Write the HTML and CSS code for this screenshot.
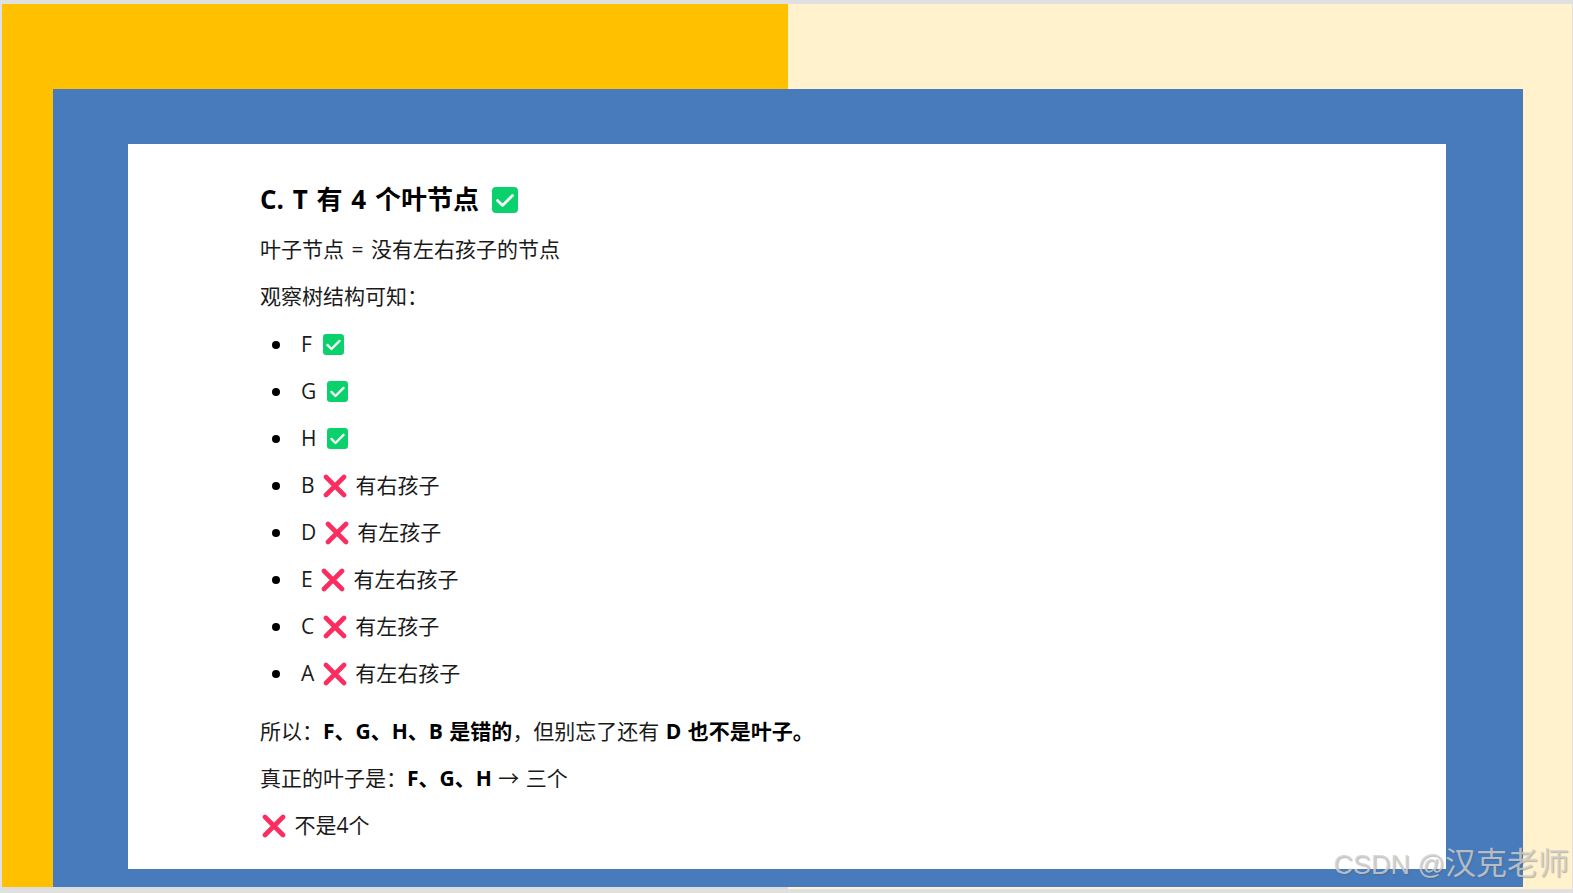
FILE: index.html
```html
<!DOCTYPE html>
<html lang="zh-CN">
<head>
<meta charset="utf-8">
<title>C. T 有 4 个叶节点</title>
<link rel="stylesheet" href="styles.css">
</head>
<body>
<svg class="defs" width="0" height="0" aria-hidden="true">
  <symbol id="ok" viewBox="0 0 26 26">
    <rect x="0" y="0" width="26" height="26" rx="4" fill="#0ad16b"/>
    <path d="M5.5 13.5 L10.5 18.5 L20.5 8.5" fill="none" stroke="#fff" stroke-width="2.8" stroke-linecap="round" stroke-linejoin="round"/>
  </symbol>
  <symbol id="no" viewBox="0 0 24 24">
    <path d="M3 3 L21 21 M21 3 L3 21" fill="none" stroke="#fb2c5f" stroke-width="4.6" stroke-linecap="round"/>
  </symbol>
</svg>
<main class="slide">
  <section class="frame">
    <article class="card">
      <h3 class="title">C. T 有 4 个叶节点 <svg class="ico-lg"><use href="#ok"/></svg></h3>
      <p class="line wide">叶子节点 = 没有左右孩子的节点</p>
      <p class="line">观察树结构可知：</p>
      <ul class="list">
        <li>F <svg class="ico-ok"><use href="#ok"/></svg></li>
        <li>G <svg class="ico-ok"><use href="#ok"/></svg></li>
        <li>H <svg class="ico-ok"><use href="#ok"/></svg></li>
        <li>B <svg class="ico-no"><use href="#no"/></svg> 有右孩子</li>
        <li>D <svg class="ico-no"><use href="#no"/></svg> 有左孩子</li>
        <li>E <svg class="ico-no"><use href="#no"/></svg> 有左右孩子</li>
        <li>C <svg class="ico-no"><use href="#no"/></svg> 有左孩子</li>
        <li>A <svg class="ico-no"><use href="#no"/></svg> 有左右孩子</li>
      </ul>
      <p class="line">所以：<strong>F、G、H、B 是错的</strong>，但别忘了还有 <strong>D 也不是叶子。</strong></p>
      <p class="line">真正的叶子是：<strong>F、G、H</strong> → 三个</p>
      <p class="line"><svg class="ico-no ico-first"><use href="#no"/></svg> 不是4个</p>
    </article>
  </section>
  <span class="mark">CSDN @<span class="mark-cjk">汉克老师</span></span>
</main>
</body>
</html>
```
FILE: styles.css
```css
html, body {
  margin: 0;
  padding: 0;
  height: 893px;
  overflow: hidden;
  background: #e0e0e0;
}
body {
  padding: 4px 1px 0 2px;
  box-sizing: border-box;
  font-family: "Open Sans", "Noto Sans CJK SC", sans-serif;
  color: #1a1a1a;
}
.defs { position: absolute; }
.slide {
  position: relative;
  height: 885px;
  box-sizing: border-box;
  padding: 85px 49px 2px 51px;
  background:
    linear-gradient(#dcdcdc, #dcdcdc) left bottom / 786px 2px no-repeat,
    linear-gradient(to right, #ffc000 786px, #fff2cc 786px);
}
.frame {
  height: 798px;
  box-sizing: border-box;
  padding: 55px 77px 18px 75px;
  background: #477bbc;
}
.card {
  height: 725px;
  box-sizing: border-box;
  padding: 32px 132px 0;
  background: #fff;
  font-size: 21px;
  line-height: 47px;
  word-spacing: 1px;
}
.title {
  margin: 0 0 3px;
  font-size: 26px;
  line-height: 47px;
  font-weight: 700;
  color: #000;
  word-spacing: 2px;
}
.line {
  margin: 0;
  height: 47px;
  white-space: nowrap;
}
.wide { word-spacing: 2px; }
.line strong { font-weight: 700; color: #000; }
.list {
  margin: 1px 0 11px;
  padding: 0 0 0 41px;
  list-style: none;
}
.list li { height: 47px; }
.list li::before {
  content: "";
  display: inline-block;
  width: 8px;
  height: 8px;
  margin: 0 21px 3px -29px;
  border-radius: 50%;
  background: #000;
}
.ico-lg, .ico-ok, .ico-no { display: inline-block; }
.ico-lg { width: 26px; height: 26px; margin-left: 4px; vertical-align: -4px; }
.ico-ok { width: 21px; height: 21px; margin-left: 4.5px; vertical-align: -3px; }
.ico-no { width: 24px; height: 24px; margin: 0 2px 0 2px; vertical-align: -5px; }
.mark {
  position: absolute;
  right: 3px;
  bottom: 7px;
  font-family: "Liberation Sans", "Noto Sans CJK SC", sans-serif;
  font-size: 27px;
  line-height: 34px;
  color: rgba(210, 210, 210, 0.8);
  text-shadow: 1px 1px 1px rgba(90, 90, 90, 0.4);
  white-space: nowrap;
}
.mark-cjk { font-size: 31px; }
```
